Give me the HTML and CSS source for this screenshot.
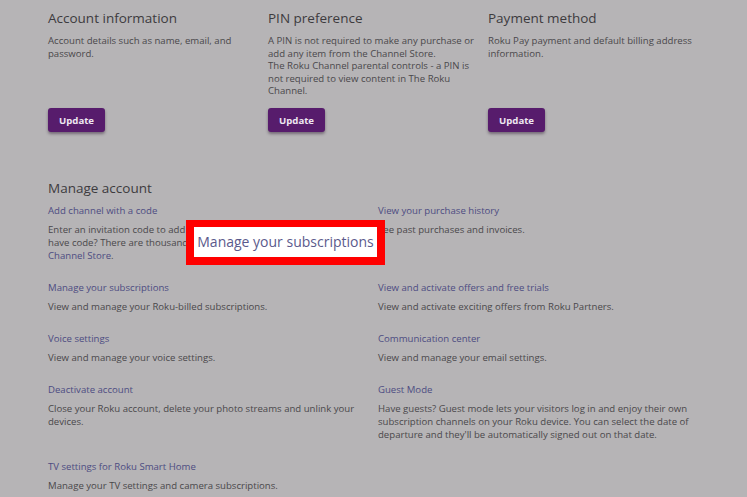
FILE: index.html
```html
<!DOCTYPE html>
<html lang="en">
<head>
    <meta charset="UTF-8">
    <meta name="viewport" content="width=device-width, initial-scale=1.0">
    <title>My Account</title>
    <link rel="stylesheet" href="styles.css">
</head>
<body>

<div class="cards">
    <div class="card">
        <h3>Account information</h3>
        <p>Account details such as name, email, and password.</p>
        <button type="button">Update</button>
    </div>
    <div class="card">
        <h3>PIN preference</h3>
        <p>A PIN is not required to make any purchase or add any item from the Channel Store.<br>The Roku Channel parental controls - a PIN is not required to view content in The Roku Channel.</p>
        <button type="button">Update</button>
    </div>
    <div class="card">
        <h3>Payment method</h3>
        <p>Roku Pay payment and default billing address information.</p>
        <button type="button">Update</button>
    </div>
</div>

<div class="manage">
    <h3>Manage account</h3>
    <div class="links">
        <div class="item">
            <a href="#">Add channel with a code</a>
            <p>Enter an invitation code to add a private channel. Don't<br>have code? There are thousands of channels in the<br><a href="#">Channel Store</a>.</p>
        </div>
        <div class="item">
            <a href="#">View your purchase history</a>
            <p>See past purchases and invoices.</p>
        </div>
        <div class="item">
            <a href="#">Manage your subscriptions</a>
            <p>View and manage your Roku-billed subscriptions.</p>
        </div>
        <div class="item">
            <a href="#">View and activate offers and free trials</a>
            <p>View and activate exciting offers from Roku Partners.</p>
        </div>
        <div class="item">
            <a href="#">Voice settings</a>
            <p>View and manage your voice settings.</p>
        </div>
        <div class="item">
            <a href="#">Communication center</a>
            <p>View and manage your email settings.</p>
        </div>
        <div class="item">
            <a href="#">Deactivate account</a>
            <p>Close your Roku account, delete your photo streams and unlink your devices.</p>
        </div>
        <div class="item">
            <a href="#">Guest Mode</a>
            <p>Have guests? Guest mode lets your visitors log in and enjoy their own subscription channels on your Roku device. You can select the date of departure and they'll be automatically signed out on that date.</p>
        </div>
        <div class="item">
            <a href="#">TV settings for Roku Smart Home</a>
            <p>Manage your TV settings and camera subscriptions.</p>
        </div>
    </div>
</div>

<div class="callout">Manage your subscriptions</div>

</body>
</html>
```

FILE: styles.css
```css
body {
    font-family: "Open Sans", Arial, sans-serif;
    margin: 0;
    padding: 10px 0 0 48px;
    background-color: #b6b4b6;
    color: #4a484b;
    position: relative;
    overflow: hidden;
}
h3 {
    margin: 0;
    font-size: 13.5px;
    font-weight: 400;
    line-height: 17px;
    color: #3d3b3e;
}
p {
    margin: 0;
    font-size: 9.6px;
    line-height: 12.6px;
}
a {
    color: #4d4c82;
    text-decoration: none;
}
.cards {
    display: grid;
    grid-template-columns: 210px 210px 210px;
    column-gap: 10px;
    min-height: 122px;
}
.card {
    display: flex;
    flex-direction: column;
    align-items: flex-start;
}
.card p {
    margin-top: 8px;
}
.card button {
    margin-top: auto;
    width: 57px;
    height: 24px;
    padding: 0;
    background-color: #571c6c;
    color: #eee6f1;
    font-family: inherit;
    font-size: 9.6px;
    font-weight: 700;
    border: none;
    border-radius: 3px;
    box-shadow: 0 2px 3px rgba(40, 20, 45, 0.45);
    cursor: pointer;
}
.manage {
    margin-top: 48px;
}
.manage h3 {
    margin-bottom: 7px;
}
.links {
    display: grid;
    grid-template-columns: 310px 330px;
    column-gap: 20px;
}
.item {
    margin-bottom: 19px;
}
.item > a {
    display: block;
    font-size: 9.6px;
    line-height: 13px;
}
.item p {
    margin-top: 6px;
    line-height: 13px;
}
.callout {
    position: absolute;
    left: 186px;
    top: 220px;
    width: 183px;
    height: 30px;
    border: 8px solid #ff0000;
    border-top-width: 7px;
    background-color: #ffffff;
    color: #5b5a8c;
    font-size: 14px;
    line-height: 30px;
    text-align: center;
    white-space: nowrap;
}
```
